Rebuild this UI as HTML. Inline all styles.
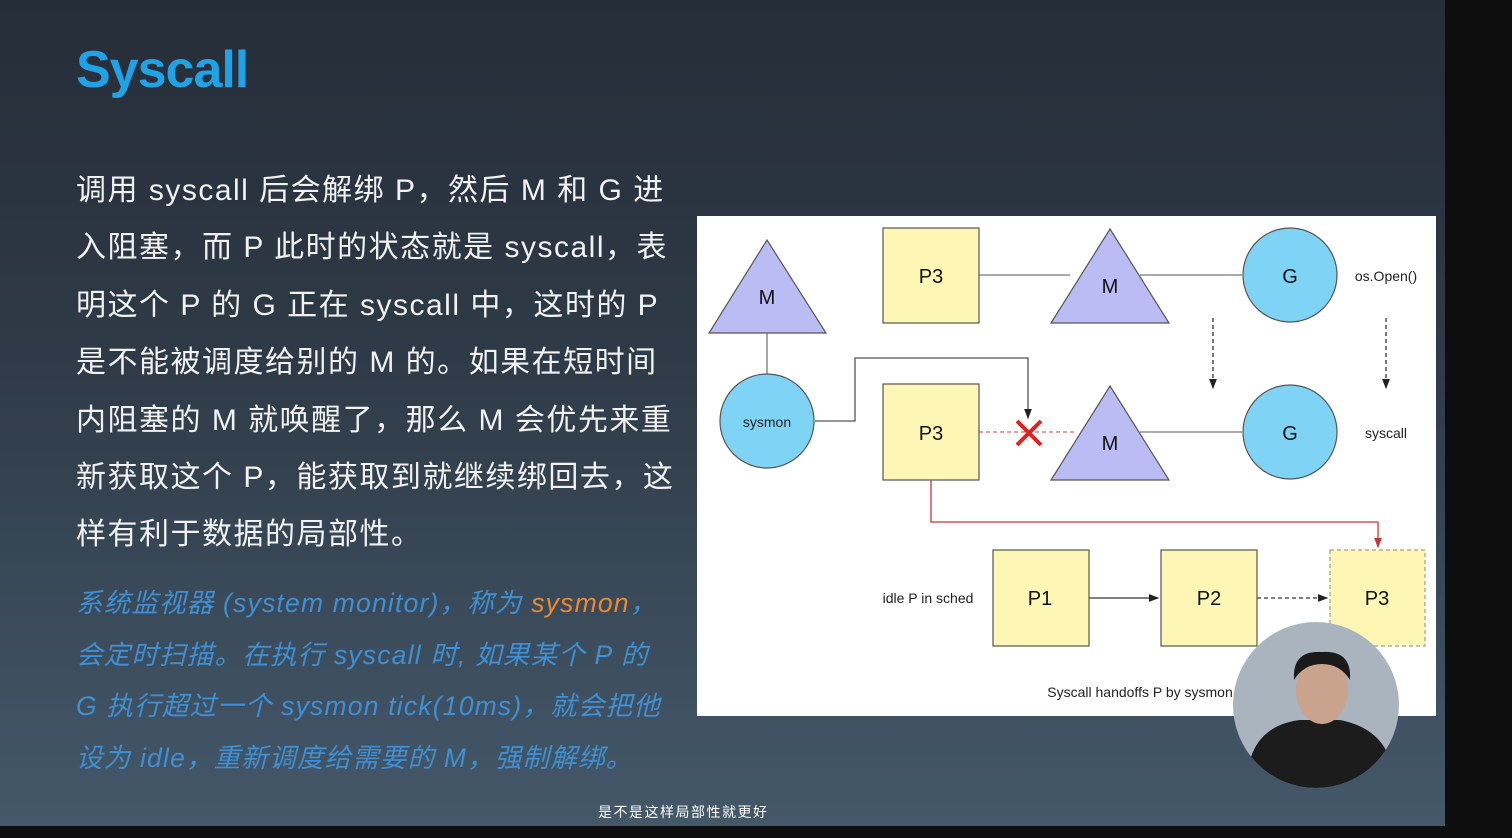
<!DOCTYPE html>
<html><head><meta charset="utf-8"><style>
html,body{margin:0;padding:0;width:1512px;height:838px;overflow:hidden;background:#0e0e0e}
.slide{position:absolute;left:0;top:0;width:1445px;height:826px;background:linear-gradient(180deg,#252d38 0%,#2f3b48 45%,#44586a 100%)}
.t{position:absolute;left:76px;top:40px;font:bold 52px "Liberation Sans",sans-serif;color:#1fa3e6;letter-spacing:-1px}
.body{position:absolute;left:76px;top:162px;white-space:nowrap;font:30px/57.4px "Liberation Sans","Noto Sans CJK SC",sans-serif;letter-spacing:1.5px;color:#f2f2f2}
.it{position:absolute;left:76px;top:578px;white-space:nowrap;font:italic 26.5px/51.7px "Liberation Sans","Noto Sans CJK SC",sans-serif;letter-spacing:1.2px;color:#3f8fd2}
.it b{font-weight:normal;color:#ea8a2e}
.sub{position:absolute;left:598px;top:802px;font:14px "Liberation Sans","Noto Sans CJK SC",sans-serif;letter-spacing:1.5px;color:#fff}
svg{position:absolute;left:0;top:0}
</style></head><body>
<div class="slide"></div>
<div class="t">Syscall</div>
<div class="body">调用 syscall 后会解绑 P，然后 M 和 G 进<br>入阻塞，而 P 此时的状态就是 syscall，表<br>明这个 P 的 G 正在 syscall 中，这时的 P<br>是不能被调度给别的 M 的。如果在短时间<br>内阻塞的 M 就唤醒了，那么 M 会优先来重<br>新获取这个 P，能获取到就继续绑回去，这<br>样有利于数据的局部性。</div>
<div class="it">系统监视器 (system monitor)，称为 <b>sysmon</b>，<br>会定时扫描。在执行 syscall 时, 如果某个 P 的<br>G 执行超过一个 sysmon tick(10ms)，就会把他<br>设为 idle，重新调度给需要的 M，强制解绑。</div>
<svg width="1512" height="838" font-family="Liberation Sans,sans-serif">
<defs><marker id="a" markerWidth="8" markerHeight="8" refX="7" refY="4" orient="auto"><path d="M0,1 L8,4 L0,7z" fill="#222"/></marker>
<marker id="r" markerWidth="8" markerHeight="8" refX="7" refY="4" orient="auto"><path d="M0,1 L8,4 L0,7z" fill="#c33"/></marker></defs>
<rect x="697" y="216" width="739" height="500" fill="#fff"/>
<g stroke="#777" stroke-width="1.3" fill="none">
<line x1="767" y1="333" x2="767" y2="374"/>
<line x1="979" y1="275" x2="1070" y2="275"/><line x1="1140" y1="275" x2="1242" y2="275"/>
<line x1="1140" y1="432" x2="1242" y2="432"/>
<polyline points="815,421 855,421 855,358 1028,358 1028,418" stroke="#555" marker-end="url(#a)"/>
<line x1="1089" y1="598" x2="1158" y2="598" stroke="#333" marker-end="url(#a)"/>
<line x1="1257" y1="598" x2="1327" y2="598" stroke="#333" stroke-dasharray="4,3" marker-end="url(#a)"/>
<line x1="1213" y1="318" x2="1213" y2="388" stroke="#333" stroke-dasharray="4,3" marker-end="url(#a)"/>
<line x1="1386" y1="318" x2="1386" y2="388" stroke="#333" stroke-dasharray="4,3" marker-end="url(#a)"/>
<line x1="979" y1="432" x2="1077" y2="432" stroke="#d66" stroke-dasharray="4,3"/>
<polyline points="931,480 931,522 1378,522 1378,547" stroke="#c33" marker-end="url(#r)"/>
</g>
<g stroke="#555" stroke-width="1.2">
<polygon points="767,240 826,333 709,333" fill="#bcbcf5"/>
<polygon points="1110,229 1169,323 1051,323" fill="#bcbcf5"/>
<polygon points="1110,386 1169,480 1051,480" fill="#bcbcf5"/>
<circle cx="1290" cy="275" r="47" fill="#7fd4f5"/>
<circle cx="1290" cy="432" r="47" fill="#7fd4f5"/>
<ellipse cx="767" cy="421" rx="47" ry="47" fill="#7fd4f5"/>
<rect x="883" y="228" width="96" height="95" fill="#fdf6b4"/>
<rect x="883" y="384" width="96" height="96" fill="#fdf6b4"/>
<rect x="993" y="550" width="96" height="96" fill="#fdf6b4"/>
<rect x="1161" y="550" width="96" height="96" fill="#fdf6b4"/>
<rect x="1330" y="550" width="95" height="96" fill="#fdf6b4" stroke="#a98" stroke-dasharray="4,3"/>
</g>
<path d="M1017,421 L1041,445 M1041,421 L1017,445" stroke="#d22" stroke-width="4"/>
<g font-size="20" fill="#111" text-anchor="middle">
<text x="767" y="304">M</text><text x="1110" y="293">M</text><text x="1110" y="450">M</text>
<text x="931" y="283">P3</text><text x="931" y="440">P3</text>
<text x="1290" y="283">G</text><text x="1290" y="440">G</text>
<text x="1040" y="605">P1</text><text x="1209" y="605">P2</text><text x="1377" y="605">P3</text>
</g>
<g font-size="14" fill="#222" text-anchor="middle">
<text x="767" y="427">sysmon</text><text x="1386" y="281">os.Open()</text><text x="1386" y="438">syscall</text>
<text x="928" y="603">idle P in sched</text><text x="1140" y="697">Syscall handoffs P by sysmon</text>
</g>
<defs><clipPath id="c"><circle cx="1316" cy="705" r="83"/></clipPath></defs>
<circle cx="1316" cy="705" r="83" fill="#a9b4be"/>
<g clip-path="url(#c)">
<path d="M1250,760 Q1260,725 1300,720 L1340,720 Q1380,728 1390,760 L1390,800 L1250,800z" fill="#1c1c1c"/>
<ellipse cx="1322" cy="690" rx="26" ry="34" fill="#c9a38c"/>
<path d="M1294,680 Q1292,650 1322,652 Q1352,650 1350,680 Q1340,664 1322,664 Q1304,664 1294,680z" fill="#1a1a1a"/>
</g>
</svg>
<div class="sub">是不是这样局部性就更好</div>
</body></html>
